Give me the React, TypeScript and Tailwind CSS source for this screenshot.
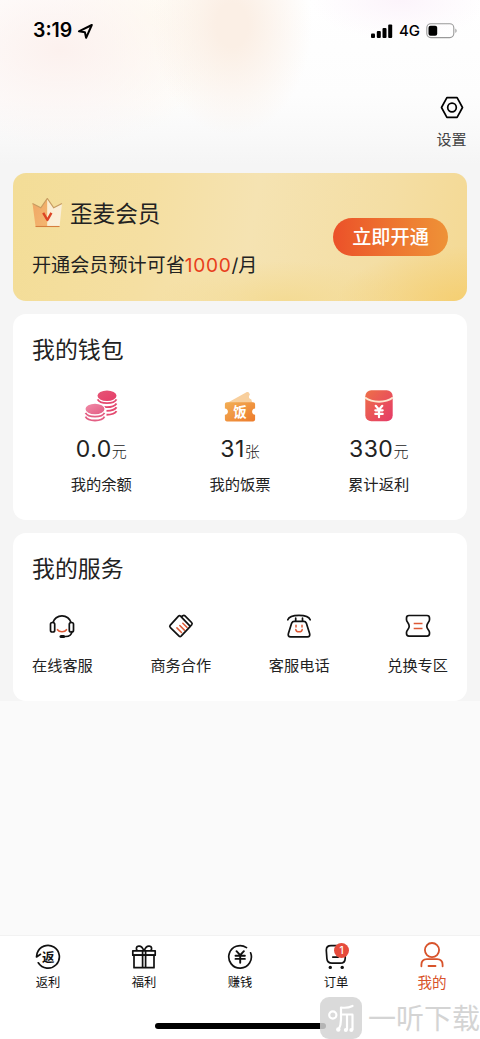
import type { ReactNode } from "react";

const wallet = [
  { icon: <CoinsIcon />, value: "0.0", unit: "元", label: "我的余额" },
  { icon: <TicketIcon />, value: "31", unit: "张", label: "我的饭票" },
  { icon: <RedPacketIcon />, value: "330", unit: "元", label: "累计返利" },
];

const services = [
  { icon: <HeadsetIcon />, label: "在线客服" },
  { icon: <HandshakeIcon />, label: "商务合作" },
  { icon: <PhoneIcon />, label: "客服电话" },
  { icon: <CouponIcon />, label: "兑换专区" },
];

export default function App() {
  return (
    <div className="relative flex h-[1039px] w-[480px] flex-col overflow-hidden bg-[#fafafa] font-['Inter','Noto_Sans_CJK_SC',sans-serif] text-[#222]">
      <div className="flex h-[701px] flex-col bg-[#f5f5f5]">
        <Header />
        <main className="flex flex-col gap-[13px] px-[13px]">
          <MemberCard />
          <section className="h-[206px] rounded-[13px] bg-white px-[19px] pt-[18px]">
            <h2 className="text-[22.9px] leading-9">我的钱包</h2>
            <div className="mt-[22px] grid grid-cols-3">
              {wallet.map((item) => (
                <div key={item.label} className="flex flex-col items-center">
                  {item.icon}
                  <div className="mt-[9px] flex h-8 items-baseline leading-8">
                    <span className="text-[23px] tracking-[0.5px]">
                      {item.value}
                    </span>
                    <span className="text-[15px] font-light">{item.unit}</span>
                  </div>
                  <div className="mt-2 text-[15.3px] leading-6">
                    {item.label}
                  </div>
                </div>
              ))}
            </div>
          </section>
          <section className="h-[168px] rounded-[13px] bg-white px-[19px] pt-[18px]">
            <h2 className="text-[22.9px] leading-9">我的服务</h2>
            <div className="mt-[26px] flex justify-between">
              {services.map((item) => (
                <div key={item.label} className="flex flex-col items-center">
                  {item.icon}
                  <div className="mt-[15px] text-[15.2px] leading-6">
                    {item.label}
                  </div>
                </div>
              ))}
            </div>
          </section>
        </main>
      </div>
      <TabBar />
      <Watermark />
    </div>
  );
}

function Header() {
  return (
    <header className="h-[173px] shrink-0 bg-[radial-gradient(ellipse_80px_110px_at_232px_25px,#fbefe5_0%,#fbefe5_20%,transparent_100%),radial-gradient(ellipse_150px_100px_at_60px_50px,#fcf1ee_0%,transparent_100%),radial-gradient(ellipse_90px_110px_at_150px_20px,#fffcf3_0%,transparent_100%),radial-gradient(ellipse_90px_40px_at_400px_0px,#fcf4fb_0%,transparent_100%),linear-gradient(#ffffff_0%,#fdfdfd_55%,#f9f9f9_78%,#f5f5f5_95%)] text-black">
      <div className="flex h-[62px] items-center justify-between pr-[22px] pl-[33px]">
        <div className="flex items-center gap-[5px]">
          <span className="text-[19.5px] font-semibold">3:19</span>
          <svg width="17" height="17" viewBox="0 0 17 17" fill="none">
            <path
              d="M14.8 2 1.9 8.3l6 .9 1.2 5.6z"
              stroke="currentColor"
              strokeWidth="2"
              strokeLinejoin="round"
            />
          </svg>
        </div>
        <div className="flex items-center">
          <svg width="22" height="15" viewBox="0 0 22 15" fill="currentColor">
            <rect x="0" y="9.5" width="4" height="4.5" rx="1" />
            <rect x="5.8" y="7" width="4" height="7" rx="1" />
            <rect x="11.5" y="4" width="4" height="10" rx="1" />
            <rect x="17.2" y="0.5" width="4" height="13.5" rx="1" />
          </svg>
          <span className="ml-[6px] text-[15px] font-medium">4G</span>
          <svg
            className="ml-[6px]"
            width="32"
            height="16"
            viewBox="0 0 32 16"
            fill="none"
          >
            <rect
              x="0.8"
              y="0.8"
              width="27"
              height="13.8"
              rx="4"
              stroke="#999"
              strokeWidth="1.1"
            />
            <rect x="2.5" y="2.7" width="8.7" height="10" rx="2" fill="#000" />
            <path d="M29.4 5.5c1.6.7 1.6 3.8 0 4.5z" fill="#999" />
          </svg>
        </div>
      </div>
      <div className="flex justify-end pt-[34px] pr-[13px]">
        <div className="flex w-[31px] flex-col items-center">
          <svg width="24" height="23" viewBox="0 0 24 23" fill="none">
            <g stroke="currentColor" strokeWidth="1.7" strokeLinejoin="round">
              <path d="M6.9 1.7h10.2l5.4 9.8-5.4 9.8H6.9L1.5 11.5z" />
              <circle cx="12" cy="11.5" r="4.3" />
            </g>
          </svg>
          <span className="mt-[9px] text-[15px] leading-6 whitespace-nowrap text-[#444]">
            设置
          </span>
        </div>
      </div>
    </header>
  );
}

function MemberCard() {
  return (
    <section className="flex h-[128px] items-center justify-between rounded-[13px] bg-[radial-gradient(ellipse_130px_55px_at_100%_100%,#f5cf72_0%,transparent_100%),radial-gradient(ellipse_130px_40px_at_60%_100%,#f4db94_0%,transparent_100%),linear-gradient(100deg,#f3dd97_0%,#f5dfa2_30%,#f5e3b2_52%,#f4dea4_80%,#f4d994_100%)] px-[19px]">
      <div className="flex flex-col">
        <div className="flex items-center gap-[7px]">
          <CrownIcon />
          <span className="text-[22.6px] leading-9">歪麦会员</span>
        </div>
        <div className="mt-[19px] flex items-baseline text-[19.1px] leading-7">
          开通会员预计可省
          <span className="tracking-[0.7px] text-[#e8401c]">1000</span>
          <span>/月</span>
        </div>
      </div>
      <button className="h-[38px] w-[115px] rounded-full bg-linear-to-r from-[#eb5029] to-[#ee9237] pt-px text-[19.2px] font-medium text-white">
        立即开通
      </button>
    </section>
  );
}

function TabBar() {
  return (
    <nav className="relative mt-auto flex h-[104px] flex-col items-center border-t border-[#f2f2f2] bg-white">
      <div className="grid w-full grid-cols-5">
        <Tab label="返利">
          <svg width="26" height="26" viewBox="0 0 26 26" fill="none">
            <path
              d="M3.3 18.8A11.4 11.4 0 1 0 2.1 9.3L1.5 13l4-2.7"
              stroke="currentColor"
              strokeWidth="1.7"
              strokeLinecap="round"
              strokeLinejoin="round"
            />
            <text
              x="13.2"
              y="17.7"
              fontSize="12.5"
              fontWeight="700"
              textAnchor="middle"
              fill="currentColor"
            >
              返
            </text>
          </svg>
        </Tab>
        <Tab label="福利">
          <svg width="26" height="26" viewBox="0 0 26 26" fill="none">
            <g stroke="currentColor" strokeWidth="1.7" strokeLinejoin="round">
              <path d="M1.8 6.8h22.4v4.4H1.8z" />
              <path d="M3 11.2h20v12.5H3zM11.6 6.8v16.9M14.6 6.8v16.9" />
              <path d="M12.8 6.8C11.5 3 9.5 1.7 7.4 2.1 5 2.5 4.9 5 6.2 6.8M13.2 6.8c1.3-3.8 3.3-5.1 5.4-4.7 2.4.4 2.5 2.9 1.2 4.7" />
            </g>
          </svg>
        </Tab>
        <Tab label="赚钱">
          <svg width="26" height="26" viewBox="0 0 26 26" fill="none">
            <g
              stroke="currentColor"
              strokeWidth="1.7"
              strokeLinecap="round"
              strokeLinejoin="round"
            >
              <path d="M19.5 3.6A11.3 11.3 0 1 0 23.6 8.8" />
              <path
                strokeWidth="1.9"
                d="m9.5 7.2 3.7 4 3.7-4M8.5 11.7h9.4M8.5 14.9h9.4M13.2 11.3v7.5"
              />
            </g>
          </svg>
        </Tab>
        <Tab label="订单">
          <div className="relative">
            <svg width="26" height="26" viewBox="0 0 26 26" fill="none">
              <path
                d="M3.3 6.2C3.3 3 4.8 1.7 8 1.7h9c3.4 0 5.2 1.5 5.2 5v7.5c0 3.3-1.7 5-5 5H9c-3.200 0-4.800-1.400-5.100-4.600zM9.800 13.100h5.500"
                stroke="currentColor"
                strokeWidth="1.7"
                strokeLinecap="round"
                strokeLinejoin="round"
              />
              <circle cx="7.3" cy="23.4" r="1.7" fill="currentColor" />
              <circle cx="19.2" cy="23.4" r="1.7" fill="currentColor" />
            </svg>
            <span className="absolute -top-px left-[11px] flex size-[15px] items-center justify-center rounded-full bg-[#e64b3c] text-[10px] font-medium text-white">
              1
            </span>
          </div>
        </Tab>
        <Tab label="我的" active>
          <svg width="26" height="28" viewBox="0 0 26 28" fill="none">
            <g stroke="currentColor" strokeWidth="1.8" strokeLinecap="round">
              <circle cx="13" cy="7.3" r="7.1" transform="translate(0 0.800)" />
              <path d="M2.4 24.300v-1.500c0-3.700 2-5.600 5.600-5.600h10c3.600 0 5.600 1.900 5.600 5.600v1.500M9.500 24h7" />
            </g>
          </svg>
        </Tab>
      </div>
      <div className="absolute bottom-[10px] left-[155px] h-[6px] w-[171px] rounded-full bg-black" />
    </nav>
  );
}

function Tab({
  label,
  active,
  children,
}: {
  label: string;
  active?: boolean;
  children: ReactNode;
}) {
  return (
    <div
      className={
        active
          ? "flex flex-col items-center text-[#d8532b]"
          : "flex flex-col items-center text-[#111]"
      }
    >
      <div
        className={
          active
            ? "flex h-[35px] items-center justify-center pt-[5px]"
            : "flex h-[35px] items-center justify-center pt-[7px]"
        }
      >
        {children}
      </div>
      <span
        className={
          active ? "text-[14.6px] leading-6" : "text-[12.3px] leading-6"
        }
      >
        {label}
      </span>
    </div>
  );
}

function Watermark() {
  return (
    <div className="absolute top-[997px] left-[320px] flex h-[42px] items-center gap-[6px]">
      <svg width="42" height="42" viewBox="0 0 42 42" fill="none">
        <rect width="42" height="42" rx="9" fill="#d3d3d3" fillOpacity="0.85" />
        <g stroke="#fff" strokeWidth="2.2" strokeLinecap="round">
          <circle cx="12.8" cy="18" r="3.6" />
          <path d="M21 10.500c4 .6 8 .2 11.500-1.500M21 10.500v12c0 4-.5 6.500-2.300 10M21.500 17.500h11M27 18v14.500M32.500 18v14.500" />
        </g>
        <circle cx="18.3" cy="32.5" r="2.2" fill="#fff" />
        <circle cx="25.8" cy="33" r="2" fill="#fff" />
        <circle cx="31.3" cy="33" r="2" fill="#fff" />
      </svg>
      <span className="pt-[2px] text-[28px] leading-10 whitespace-nowrap text-[#d4d4d4]">
        一听下载
      </span>
    </div>
  );
}

function CrownIcon() {
  return (
    <svg width="31" height="31" viewBox="0 0 31 31" fill="none">
      <defs>
        <linearGradient id="crownLeft" x1="0" y1="0" x2="1" y2="1">
          <stop stopColor="#efa765" />
          <stop offset="1" stopColor="#f4b670" />
        </linearGradient>
        <linearGradient id="crownRight" x1="0" y1="0" x2="1" y2="1">
          <stop stopColor="#fbedd3" />
          <stop offset="1" stopColor="#faf0da" />
        </linearGradient>
      </defs>
      <g transform="translate(0 -1)">
        <path d="m.5 6.5 8.3 4.3 6.5-9.3V30H3.6z" fill="url(#crownLeft)" />
        <path d="m30 6.5-8.3 4.3-6.4-9.3V30h12.2z" fill="url(#crownRight)" />
        <path
          d="m.5 6.5 8.3 4.3 6.5-9.3 6.4 9.3L30 6.5"
          stroke="#c79c61"
          strokeWidth="1.2"
        />
        <path d="M3.6 29.5h24" stroke="#d67e3d" strokeWidth="1.1" />
        <path
          d="m11.2 15.8 4.2 7.2 4-7.2"
          stroke="#dc4425"
          strokeWidth="2.4"
          strokeLinejoin="round"
        />
      </g>
    </svg>
  );
}

function CoinsIcon() {
  return (
    <svg width="34" height="34" viewBox="0 0 34 34" fill="none">
      <defs>
        <linearGradient id="coinBack" x1="0" y1="0" x2="1" y2="1">
          <stop stopColor="#e55576" />
          <stop offset="1" stopColor="#e63c68" />
        </linearGradient>
        <linearGradient id="coinFront" x1="0" y1="0" x2="1" y2="1">
          <stop stopColor="#f08ca8" />
          <stop offset="1" stopColor="#e35b83" />
        </linearGradient>
      </defs>
      <ellipse cx="23" cy="5.8" rx="9.5" ry="5.2" fill="url(#coinBack)" />
      <g stroke="#e4496f" strokeWidth="1.9">
        <path d="M13.6 9.4c2.6 5 16.3 5 18.9 0" />
        <path d="M20 17c5.5.4 10.8-.8 12.5-3.6M22.5 20.9c4.5 0 8.7-1.2 10-3.6M22.5 24.7c4.5 0 8.7-1.2 10-3.6" />
      </g>
      <ellipse cx="11" cy="19.4" rx="10.8" ry="6.6" fill="#fff" />
      <ellipse cx="11" cy="19" rx="9.5" ry="5.2" fill="url(#coinFront)" />
      <g stroke="#e35f84" strokeWidth="1.8">
        <path d="M1.5 22.8c2.6 5 16.4 5 19 0M1.5 26.6c2.6 5.2 16.4 5.2 19 0" />
      </g>
    </svg>
  );
}

function TicketIcon() {
  return (
    <svg width="34" height="34" viewBox="0 0 34 34" fill="none">
      <defs>
        <linearGradient id="ticket" x1="0" y1="0" x2="1" y2="1">
          <stop stopColor="#f2ae55" />
          <stop offset="1" stopColor="#ed7b2b" />
        </linearGradient>
      </defs>
      <path
        d="M3.2 13.5 23 2.5c1.5-.7 2.7-.5 3.3.7l.6 1.5c-1.5 1.3-1.4 4.1 1.3 4.5l1.3 4.3z"
        fill="#f8cf9d"
      />
      <path
        d="M4 12.3h26c1.3 0 2.1.8 2.1 2.1v4c-4 .4-4 6 0 6.400v4.500c0 1.300-.8 2.100-2.100 2.100H4c-1.300 0-2.100-.8-2.100-2.100v-4.500c4-.4 4-6 0-6.400v-4c0-1.300.8-2.100 2.100-2.100z"
        fill="url(#ticket)"
      />
      <text
        x="17"
        y="26.6"
        fontSize="13.5"
        fontWeight="700"
        textAnchor="middle"
        fill="#fff"
      >
        饭
      </text>
    </svg>
  );
}

function RedPacketIcon() {
  return (
    <svg width="34" height="34" viewBox="0 0 34 34" fill="none">
      <defs>
        <linearGradient id="packet" x1="0" y1="0" x2="1" y2="1">
          <stop stopColor="#ee7048" />
          <stop offset="1" stopColor="#e53a68" />
        </linearGradient>
      </defs>
      <rect x="3.3" y="0.2" width="27.4" height="31" rx="6" fill="url(#packet)" />
      <path d="M3 7.5c7.5 5.5 20.5 5.5 28 0" stroke="#fde6cf" strokeWidth="2" />
      <path
        d="m13.7 15.8 3.3 4 3.3-4M13.3 20.3h7.4M13.3 23.9h7.4M17 20v7.2"
        stroke="#fff"
        strokeWidth="2.2"
        strokeLinecap="round"
      />
    </svg>
  );
}

function HeadsetIcon() {
  return (
    <svg width="26" height="26" viewBox="0 0 26 26" fill="none">
      <g stroke="#111" strokeWidth="1.7" strokeLinecap="round">
        <path d="M4 9.5a9.2 8.4 0 0 1 18 0M23 18.5c-.5 3.6-3 5-6.3 5H13" />
        <rect x="1.5" y="9.5" width="4.2" height="9.5" rx="1.8" />
        <rect x="20.3" y="9.5" width="4.2" height="9.5" rx="1.8" />
        <path d="M12 23.5h2.6" strokeWidth="3" />
      </g>
      <path
        d="M8.5 16.7c1.8 2.8 7.2 2.8 9 0"
        stroke="#dd5935"
        strokeWidth="1.6"
        strokeLinecap="round"
      />
    </svg>
  );
}

function HandshakeIcon() {
  return (
    <svg width="26" height="26" viewBox="0 0 26 26" fill="none">
      <path
        d="m13.3 3.8 1.5-1.1c.8-.5 1.6-.4 2.2.2l6.6 6.6c.7.7.7 1.4.2 2.1l-1.5 1.7"
        stroke="#111"
        strokeWidth="1.7"
        strokeLinejoin="round"
      />
      <path
        d="M10.5 3.2c.6-.6 1.4-.6 2 0l9.8 10.2-9.2 9.7c-.6.6-1.4.6-2 0l-8.7-8.5c-.8-.8-.8-1.7-.1-2.5z"
        stroke="#111"
        strokeWidth="1.7"
        strokeLinejoin="round"
      />
      <path
        d="m14.8 10.2 4.3 4.3M11.8 12.5l4.6 4.6M8.9 14.9l4.6 4.6"
        stroke="#dd5935"
        strokeWidth="1.5"
        strokeLinecap="round"
      />
    </svg>
  );
}

function PhoneIcon() {
  return (
    <svg width="26" height="26" viewBox="0 0 26 26" fill="none">
      <g
        stroke="#111"
        strokeWidth="1.7"
        strokeLinecap="round"
        strokeLinejoin="round"
      >
        <path d="M1.8 6.8C3 3.3 6.3 2.3 13 2.3s10 1 11.2 4.5M9.7 5.2v3M16.5 5.2v3" />
        <path d="M8.2 8.3h9.6c1.2 0 2 .6 2.5 1.8l3.3 10.5c.6 2-.2 3.2-2.2 3.2H4.6c-2 0-2.8-1.2-2.2-3.2l3.3-10.5c.5-1.2 1.3-1.8 2.5-1.8z" />
      </g>
      <path
        d="M10 12.3v1.8M16 12.3v1.8M9.8 16.6c.4 3 6 3 6.4 0"
        stroke="#dd5935"
        strokeWidth="1.5"
        strokeLinecap="round"
      />
    </svg>
  );
}

function CouponIcon() {
  return (
    <svg width="26" height="26" viewBox="0 0 26 26" fill="none">
      <path
        d="M4 2.5h18c1.7 0 2.5 1 2.5 2.5v1.8c0 2.5-2.7 3.2-2.7 6.4s2.7 3.9 2.7 6.4v1c0 1.7-.8 2.6-2.5 2.6H4c-1.7 0-2.5-.9-2.5-2.6v-1c0-2.5 2.7-3.2 2.7-6.4S1.5 9.3 1.5 6.8V5C1.5 3.5 2.3 2.5 4 2.5z"
        stroke="#111"
        strokeWidth="1.7"
      />
      <path
        d="M8.7 10.5h8.8M8.7 15.5h8.8"
        stroke="#dd5935"
        strokeWidth="1.6"
      />
    </svg>
  );
}
